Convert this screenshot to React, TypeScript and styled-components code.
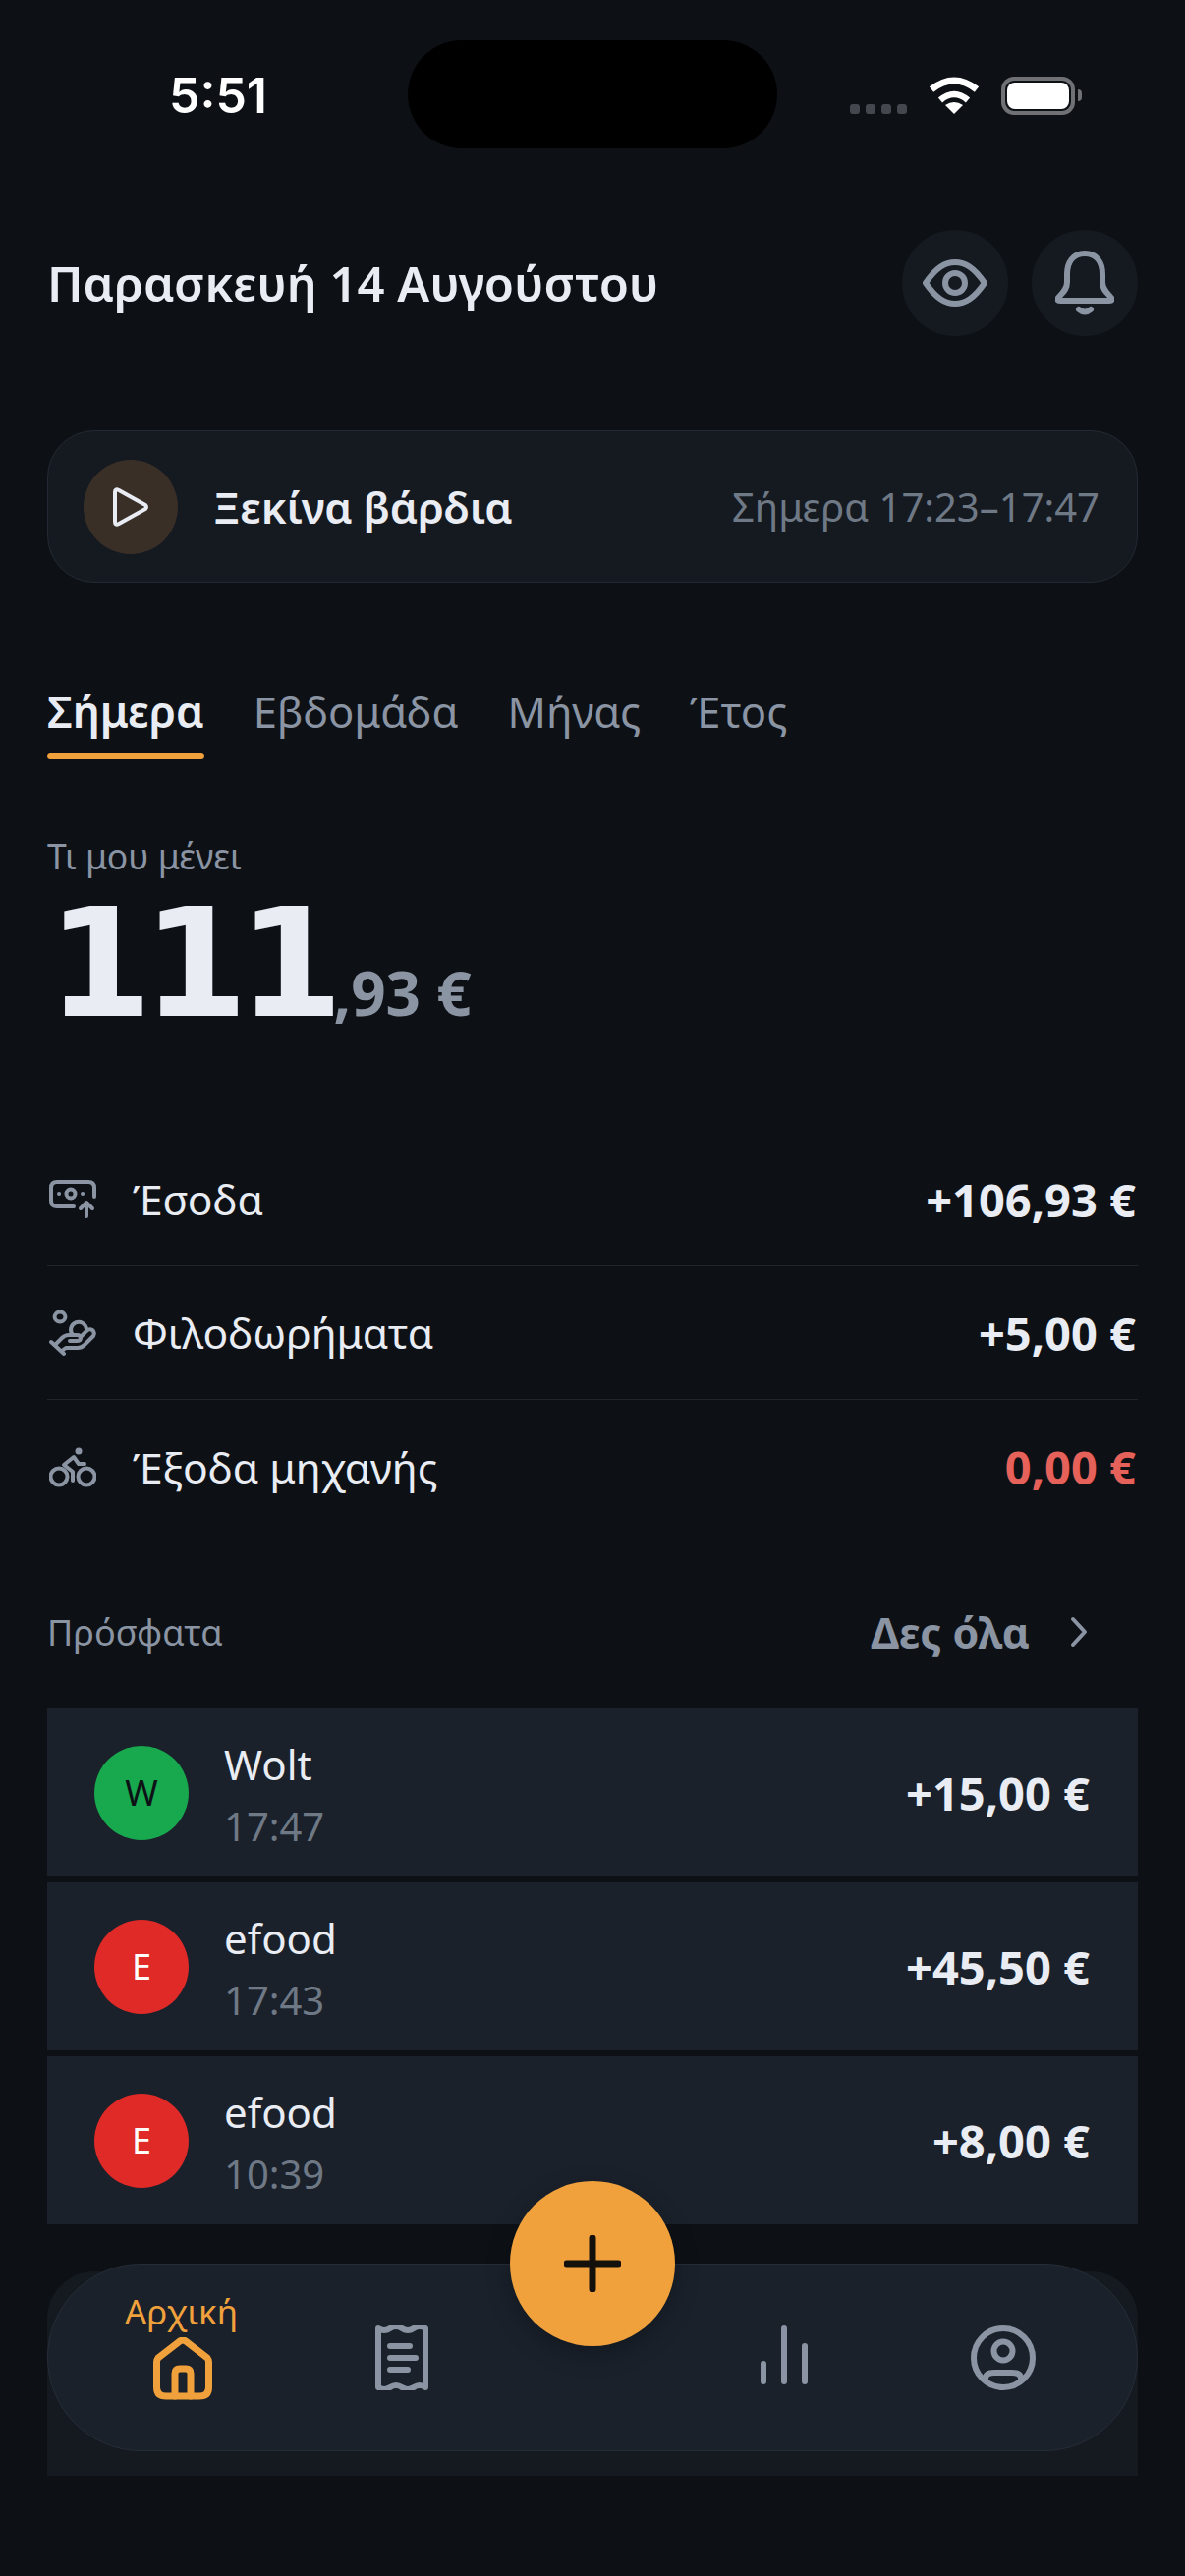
import styled, { createGlobalStyle } from 'styled-components';

const GlobalStyle = createGlobalStyle`
  html, body {
    margin: 0;
    background: #0d1116;
  }
  * {
    box-sizing: border-box;
  }
`;

const colors = {
  bg: '#0d1116',
  panel: '#151a21',
  row: '#1a212b',
  line: '#20262e',
  text: '#e9edf3',
  muted: '#8a94a3',
  faint: '#6f7986',
  orange: '#f0a13c',
  red: '#e5615a',
};

const summaryRows = [
  { icon: <MoneyIcon />, label: 'Έσοδα', value: '+106,93 €', negative: false },
  { icon: <HandIcon />, label: 'Φιλοδωρήματα', value: '+5,00 €', negative: false },
  { icon: <BikeIcon />, label: 'Έξοδα μηχανής', value: '0,00 €', negative: true },
];

const recent = [
  { letter: 'W', name: 'Wolt', time: '17:47', value: '+15,00 €', tone: 'wolt' },
  { letter: 'E', name: 'efood', time: '17:43', value: '+45,50 €', tone: 'efood' },
  { letter: 'E', name: 'efood', time: '10:39', value: '+8,00 €', tone: 'efood' },
];

const tabs = ['Σήμερα', 'Εβδομάδα', 'Μήνας', 'Έτος'];

function WifiIcon() {
  return (
    <svg width="52" height="38" viewBox="0 0 52 38" fill="none">
      <path d="M3 13 Q26 -5 49 13" stroke="#fff" strokeWidth="7" />
      <path d="M12 24 Q26 12 40 24" stroke="#fff" strokeWidth="6.5" />
      <path d="M26 38 L17 29 Q26 23 35 29 Z" fill="#fff" />
    </svg>
  );
}

function EyeIcon() {
  return (
    <svg width="66" height="48" viewBox="0 0 66 48" fill="none" stroke={colors.muted} strokeWidth="6">
      <path d="M3 24 C14 8 23 3 33 3 C43 3 52 8 63 24 C52 40 43 45 33 45 C23 45 14 40 3 24 Z" strokeLinejoin="round" />
      <circle cx="33" cy="24" r="10" />
    </svg>
  );
}

function BellIcon() {
  return (
    <svg width="60" height="67" viewBox="0 0 60 67" fill="none" stroke={colors.muted} strokeWidth="6" strokeLinecap="round" strokeLinejoin="round">
      <path d="M30 3 C18 3 12 12 12 24 V32 C12 40 7 43 3 48 Q1 51 5 51 H55 Q59 51 57 48 C53 43 48 40 48 32 V24 C48 12 42 3 30 3 Z" />
      <path d="M24 60 Q30 65 36 60" />
    </svg>
  );
}

function PlayIcon() {
  return (
    <svg width="38" height="40" viewBox="0 0 38 40" fill="none" stroke={colors.text} strokeWidth="4" strokeLinejoin="round">
      <path d="M3 5 Q3 1 7 3 L34 18 Q36 20 34 22 L7 37 Q3 39 3 35 Z" />
    </svg>
  );
}

function MoneyIcon() {
  return (
    <svg width="48" height="40" viewBox="0 0 48 40" fill="none" stroke={colors.muted} strokeWidth="4" strokeLinecap="round" strokeLinejoin="round">
      <path d="M25 27 H8 Q2 27 2 21 V8 Q2 2 8 2 H40 Q46 2 46 8 V17" />
      <circle cx="22" cy="14" r="4.5" />
      <path d="M10 14 H10.1 M34 14 H34.1" />
      <path d="M38 37 V23 M32 29 L38 23 L44 29" />
    </svg>
  );
}

function HandIcon() {
  return (
    <svg width="48" height="48" viewBox="0 0 48 48" fill="none" stroke={colors.muted} strokeWidth="4" strokeLinecap="round" strokeLinejoin="round">
      <circle cx="11" cy="7" r="5.5" />
      <path d="M2 33 L15 45" />
      <path d="M6 36 L13 29 Q16 26 20 26 H28 Q32 26 32 29 Q32 32 28 32 H21" />
      <path d="M13 42 L17 39 H29 Q33 39 36 36 L45 27 Q47 23 44 21 Q41 19 38 22 L32 28" />
      <path d="M24 26 A8 8 0 1 1 38 20" />
    </svg>
  );
}

function BikeIcon() {
  return (
    <svg width="48" height="42" viewBox="0 0 48 42" fill="none" stroke={colors.muted} strokeWidth="4" strokeLinecap="round" strokeLinejoin="round">
      <circle cx="10" cy="31" r="8.5" />
      <circle cx="38" cy="31" r="8.5" />
      <path d="M24 35 V26 L15 19 L25 11 L30 18 H36" />
      <circle cx="30" cy="5" r="3.5" fill={colors.muted} stroke="none" />
    </svg>
  );
}

function ChevronIcon() {
  return (
    <svg width="20" height="32" viewBox="0 0 20 32" fill="none" stroke={colors.muted} strokeWidth="4" strokeLinecap="round" strokeLinejoin="round">
      <path d="M4 3 L16 16 L4 29" />
    </svg>
  );
}

function HomeIcon() {
  return (
    <svg width="60" height="64" viewBox="0 0 60 64" fill="none" stroke={colors.orange} strokeWidth="7" strokeLinecap="round" strokeLinejoin="round">
      <path d="M3.5 25 Q3.5 23 5 21 L27 4 Q30 2 33 4 L55 21 Q56.500 23 56.500 25 V51 Q56.500 60 47 60 H13 Q3.500 60 3.500 51 Z" />
      <path d="M22 60 V37 Q22 32 27 32 H33 Q38 32 38 37 V60" />
    </svg>
  );
}

function ReceiptIcon() {
  return (
    <svg width="54" height="66" viewBox="0 0 54 66" fill="none" stroke={colors.muted} strokeWidth="6" strokeLinecap="round" strokeLinejoin="round">
      <path d="M3 3 Q9 7 15 3 T27 3 T39 3 T51 3 V63 Q45 59 39 63 T27 63 T15 63 T3 63 Z" />
      <path d="M15 21 H35 M15 33 H41 M15 45 H33" />
    </svg>
  );
}

function BarsIcon() {
  return (
    <svg width="48" height="60" viewBox="0 0 48 60" fill="none" stroke={colors.muted} strokeWidth="6" strokeLinecap="round">
      <path d="M3 39 V57 M24 3 V57 M45 21 V57" />
    </svg>
  );
}

function ProfileIcon() {
  return (
    <svg width="66" height="66" viewBox="0 0 66 66" fill="none" stroke={colors.muted} strokeWidth="6" strokeLinecap="round">
      <circle cx="33" cy="33" r="30" />
      <circle cx="33" cy="26" r="9.5" />
      <path d="M15 54 Q15 48 24 48 H42 Q51 48 51 54" />
    </svg>
  );
}

function PlusIcon() {
  return (
    <svg width="58" height="58" viewBox="0 0 58 58" fill="none" stroke="#14110d" strokeWidth="7" strokeLinecap="round">
      <path d="M29 3 V55 M3 29 H55" />
    </svg>
  );
}

export default function App() {
  return (
    <Screen>
      <GlobalStyle />

      <StatusBar>
        <Time>5:51</Time>
        <Island />
        <StatusIcons>
          <SignalDots>
            <SignalDot />
            <SignalDot />
            <SignalDot />
            <SignalDot />
          </SignalDots>
          <WifiIcon />
          <Battery>
            <BatteryFill />
          </Battery>
          <BatteryNub />
        </StatusIcons>
      </StatusBar>

      <Header>
        <DateTitle>Παρασκευή 14 Αυγούστου</DateTitle>
        <HeaderActions>
          <RoundButton>
            <EyeIcon />
          </RoundButton>
          <RoundButton>
            <BellIcon />
          </RoundButton>
        </HeaderActions>
      </Header>

      <ShiftCard>
        <PlayCircle>
          <PlayIcon />
        </PlayCircle>
        <ShiftTitle>Ξεκίνα βάρδια</ShiftTitle>
        <ShiftTime>Σήμερα 17:23–17:47</ShiftTime>
      </ShiftCard>

      <Tabs>
        {tabs.map((tab, i) => (
          <Tab key={tab} $active={i === 0}>
            {tab}
            {i === 0 && <TabLine />}
          </Tab>
        ))}
      </Tabs>

      <BalanceLabel>Τι μου μένει</BalanceLabel>
      <Balance>
        <BalanceWhole>111</BalanceWhole>
        <BalanceCents>,93 €</BalanceCents>
      </Balance>

      <SummaryList>
        {summaryRows.map((row) => (
          <SummaryRow key={row.label}>
            <SummaryIcon>{row.icon}</SummaryIcon>
            <SummaryLabel>{row.label}</SummaryLabel>
            <SummaryValue $negative={row.negative}>{row.value}</SummaryValue>
          </SummaryRow>
        ))}
      </SummaryList>

      <RecentHeader>
        <RecentTitle>Πρόσφατα</RecentTitle>
        <SeeAll>
          Δες όλα
          <ChevronIcon />
        </SeeAll>
      </RecentHeader>

      <RecentList>
        {recent.map((item) => (
          <RecentRow key={item.time}>
            <Avatar $tone={item.tone}>{item.letter}</Avatar>
            <RecentInfo>
              <RecentName>{item.name}</RecentName>
              <RecentTime>{item.time}</RecentTime>
            </RecentInfo>
            <RecentValue>{item.value}</RecentValue>
          </RecentRow>
        ))}
      </RecentList>

      <DockBackdrop />
      <Dock>
        <NavItem>
          <NavLabel>Αρχική</NavLabel>
          <HomeIcon />
        </NavItem>
        <NavItem $raised>
          <ReceiptIcon />
        </NavItem>
        <span />
        <NavItem $raised>
          <BarsIcon />
        </NavItem>
        <NavItem $raised>
          <ProfileIcon />
        </NavItem>
      </Dock>
      <AddButton>
        <PlusIcon />
      </AddButton>
    </Screen>
  );
}

const Screen = styled.div`
  position: relative;
  width: 1206px;
  height: 2622px;
  overflow: hidden;
  background: ${colors.bg};
  color: ${colors.text};
  font-family: 'Noto Sans', sans-serif;
`;

const StatusBar = styled.div`
  display: flex;
  align-items: center;
  height: 110px;
  margin-top: 41px;
  padding-left: 172px;
`;

const Time = styled.div`
  width: 243px;
  padding-top: 2px;
  font-family: 'Inter', sans-serif;
  font-size: 50px;
  font-weight: 600;
  color: #fff;
`;

const Island = styled.div`
  width: 376px;
  height: 110px;
  border-radius: 55px;
  background: #000;
`;

const StatusIcons = styled.div`
  display: flex;
  align-items: flex-start;
  height: 40px;
  margin-left: 74px;
  margin-top: 4px;
`;

const SignalDots = styled.div`
  display: flex;
  gap: 6px;
  margin-top: 28px;
  margin-right: 22px;
`;

const SignalDot = styled.div`
  width: 10px;
  height: 10px;
  border-radius: 3px;
  background: #44484e;
`;

const Battery = styled.div`
  width: 75px;
  height: 39px;
  margin-left: 22px;
  padding: 2px;
  border: 4px solid #6f7175;
  border-radius: 13px;
`;

const BatteryFill = styled.div`
  width: 100%;
  height: 100%;
  border-radius: 8px;
  background: #fff;
`;

const BatteryNub = styled.div`
  width: 4px;
  height: 12px;
  margin: 13px 0 0 3px;
  border-radius: 0 4px 4px 0;
  background: #6f7175;
`;

const Header = styled.div`
  display: flex;
  align-items: center;
  justify-content: space-between;
  margin-top: 83px;
  padding: 0 48px;
`;

const DateTitle = styled.div`
  font-size: 49px;
  font-weight: 600;
`;

const HeaderActions = styled.div`
  display: flex;
  gap: 24px;
`;

const RoundButton = styled.div`
  display: flex;
  align-items: center;
  justify-content: center;
  width: 108px;
  height: 108px;
  border-radius: 50%;
  background: ${colors.panel};
`;

const ShiftCard = styled.div`
  display: flex;
  align-items: center;
  height: 155px;
  margin: 96px 48px 0;
  padding: 0 38px 0 36px;
  border: 1px solid #232932;
  border-radius: 48px;
  background: ${colors.panel};
`;

const PlayCircle = styled.div`
  display: flex;
  align-items: center;
  justify-content: center;
  width: 96px;
  height: 96px;
  border-radius: 50%;
  background: #3a2f27;
`;

const ShiftTitle = styled.div`
  margin-left: 36px;
  font-size: 44px;
  font-weight: 600;
  letter-spacing: -0.2px;
`;

const ShiftTime = styled.div`
  margin-left: auto;
  font-size: 40px;
  color: ${colors.faint};
`;

const Tabs = styled.div`
  display: flex;
  align-items: flex-start;
  gap: 50px;
  margin: 103px 48px 0;
`;

const Tab = styled.div<{ $active: boolean }>`
  font-size: ${(p) => (p.$active ? '44.5px' : '43.5px')};
  line-height: 56px;
  font-weight: ${(p) => (p.$active ? 600 : 400)};
  color: ${(p) => (p.$active ? colors.text : colors.muted)};
`;

const TabLine = styled.div`
  height: 7px;
  margin-top: 14px;
  border-radius: 4px;
  background: ${colors.orange};
`;

const BalanceLabel = styled.div`
  margin: 76px 48px 0;
  font-size: 35.5px;
  line-height: 44px;
  color: ${colors.muted};
`;

const Balance = styled.div`
  display: flex;
  align-items: baseline;
  height: 150px;
  margin: 13px 48px 0;
`;

const BalanceWhole = styled.div`
  font-family: 'DejaVu Sans', sans-serif;
  font-size: 154px;
  line-height: 150px;
  font-weight: 700;
  letter-spacing: -10px;
`;

const BalanceCents = styled.div`
  font-size: 62px;
  font-weight: 700;
  color: ${colors.muted};
`;

const SummaryList = styled.div`
  margin: 97px 48px 0;
`;

const SummaryRow = styled.div`
  display: flex;
  align-items: center;
  height: 136px;
  border-bottom: 1px solid ${colors.line};

  &:last-child {
    border-bottom: none;
  }
`;

const SummaryIcon = styled.div`
  display: flex;
  align-items: center;
  width: 87px;
  padding-left: 2px;
`;

const SummaryLabel = styled.div`
  font-size: 42.5px;
  color: ${colors.text};
`;

const SummaryValue = styled.div<{ $negative: boolean }>`
  margin-left: auto;
  padding-right: 2px;
  font-size: 47px;
  font-weight: 700;
  color: ${(p) => (p.$negative ? colors.red : colors.text)};
`;

const RecentHeader = styled.div`
  display: flex;
  align-items: center;
  justify-content: space-between;
  height: 60px;
  margin: 70px 48px 0;
  padding-right: 50px;
`;

const RecentTitle = styled.div`
  font-size: 36px;
  color: ${colors.muted};
`;

const SeeAll = styled.div`
  display: flex;
  align-items: center;
  gap: 40px;
  font-size: 43px;
  font-weight: 700;
  color: ${colors.muted};
`;

const RecentList = styled.div`
  display: flex;
  flex-direction: column;
  gap: 6px;
  margin: 48px 48px 0;
`;

const RecentRow = styled.div`
  display: flex;
  align-items: center;
  height: 171px;
  padding: 0 49px 0 48px;
  background: ${colors.row};
`;

const Avatar = styled.div<{ $tone: string }>`
  display: flex;
  align-items: center;
  justify-content: center;
  width: 96px;
  height: 96px;
  border-radius: 50%;
  font-size: 36px;
  background: ${(p) => (p.$tone === 'wolt' ? '#18a84e' : '#e02a27')};
  color: ${(p) => (p.$tone === 'wolt' ? '#0d1116' : '#fff')};
`;

const RecentInfo = styled.div`
  display: flex;
  flex-direction: column;
  margin-left: 36px;
`;

const RecentName = styled.div`
  font-size: 42px;
  line-height: 60px;
`;

const RecentTime = styled.div`
  margin-top: 9px;
  font-size: 40px;
  line-height: 48px;
  color: ${colors.faint};
`;

const RecentValue = styled.div`
  margin-left: auto;
  font-size: 47px;
  font-weight: 700;
`;

const DockBackdrop = styled.div`
  position: absolute;
  left: 48px;
  top: 2312px;
  width: 1110px;
  height: 208px;
  border-radius: 48px 48px 0 0;
  background: ${colors.panel};
`;

const Dock = styled.nav`
  position: absolute;
  left: 48px;
  top: 2304px;
  display: grid;
  grid-template-columns: 223px 223px 1fr 223px 223px;
  width: 1110px;
  height: 191px;
  padding: 0 25px;
  border: 1px solid #262d37;
  border-radius: 96px;
  background: ${colors.row};
`;

const NavItem = styled.div<{ $raised?: boolean }>`
  display: flex;
  flex-direction: column;
  align-items: center;
  padding-top: ${(p) => (p.$raised ? '62px' : '25px')};
`;

const NavLabel = styled.div`
  height: 49px;
  margin-right: 2px;
  font-size: 35px;
  line-height: 46px;
  color: ${colors.orange};
`;

const AddButton = styled.div`
  position: absolute;
  left: 519px;
  top: 2220px;
  display: flex;
  align-items: center;
  justify-content: center;
  width: 168px;
  height: 168px;
  border-radius: 50%;
  background: ${colors.orange};
  box-shadow: 0 8px 24px rgba(0, 0, 0, 0.25);
`;
